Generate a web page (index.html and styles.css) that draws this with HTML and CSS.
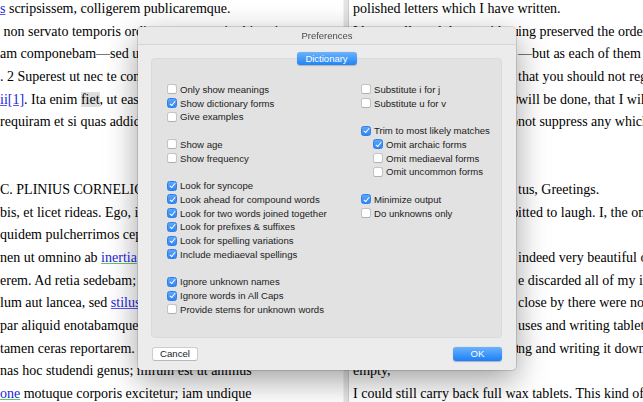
FILE: index.html
```html
<!DOCTYPE html>
<html>
<head>
<meta charset="utf-8">
<link rel="stylesheet" href="styles.css">
</head>
<body>
<div class="page">
  <div class="col-left">
    <div class="line"><a href="#">s</a> scripsissem, colligerem publicaremque.</div>
    <div class="line">&nbsp;non servato temporis ordine—neque enim histori</div>
    <div class="line">am componebam—sed ut quaeque in manus venerat.</div>
    <div class="line">. 2 Superest ut nec te consilii nec me paeniteat obsequ</div>
    <div class="line"><a href="#">ii[1]</a>. Ita enim <span class="hl">fiet</span>, ut eas quae adhuc neglectae iacent</div>
    <div class="line">requiram et si quas addidero non supprimam. Vale.</div>
    <div class="line">&nbsp;</div>
    <div class="line">&nbsp;</div>
    <div class="line">C. PLINIUS CORNELIO TACITO SUO S.</div>
    <div class="line">bis, et licet rideas. Ego, ille quem nosti, apros tres et</div>
    <div class="line">quidem pulcherrimos cepi. 'Ipse?' inquis. Ipse; non</div>
    <div class="line">nen ut omnino ab <a href="#" class="green">inertia</a> mea et quiete discederem.</div>
    <div class="line">erem. Ad retia sedebam; erat in proximo non venabu</div>
    <div class="line">lum aut lancea, sed <a href="#">stilus</a> et pugillares; medita</div>
    <div class="line">par aliquid enotabamque, ut si manus vacuas, plenas</div>
    <div class="line">tamen ceras reportarem. 2 Non est quod contem</div>
    <div class="line">nas hoc studendi genus; mirum est ut animus</div>
    <div class="line"><a href="#" class="green">one</a> motuque corporis excitetur; iam undique</div>
  </div>
  <div class="divider"></div>
  <div class="col-right">
    <div class="line">polished letters which I have written.</div>
    <div class="line"><span class="under">I have collected them, without hav</span>ing preserved the order of time</div>
    <div class="line"><span class="under">of time, for I was not writing history</span>—but as each of them came to hand.</div>
    <div class="line"><span class="under">It remains now only</span>that you should not regret your advice,</div>
    <div class="line"><span class="under">nor I my compliance; for so it</span>will be done, that I will seek out</div>
    <div class="line"><span class="under">those still lying neglected, and</span>not suppress any which I may add.</div>
    <div class="line">&nbsp;</div>
    <div class="line">&nbsp;</div>
    <div class="line"><span class="under">C. Plinius to Cornelius Taci</span>tus, Greetings.</div>
    <div class="line"><span class="under">You will laugh, and you are perm</span>itted to laugh. I, the one you know,</div>
    <div class="line"><span class="under">have caught three boars,</span></div>
    <div class="line"><span class="under">'Yourself?' you say. Yes, and</span>indeed very beautiful ones.</div>
    <div class="line"><span class="under">not that I hav</span>e discarded all of my inertia</div>
    <div class="line"><span class="under">I sat by the nets; and</span>close by there were no spears</div>
    <div class="line"><span class="under">or lances, but styl</span>uses and writing tablets;</div>
    <div class="line"><span class="under">I was thinking something, noti</span>ng and writing it down, so</div>
    <div class="line">empty,</div>
    <div class="line">I could still carry back full wax tablets. This kind of study</div>
  </div>
</div>

<div class="dialog">
  <div class="titlebar">Preferences</div>
  <div class="dbody">
    <div class="tabs"><span class="tab">Dictionary</span></div>
    <div class="box">
      <div class="opts">
        <div class="group">
          <div class="opt"><span class="cb"></span>Only show meanings</div>
          <div class="opt"><span class="cb on"></span>Show dictionary forms</div>
          <div class="opt"><span class="cb"></span>Give examples</div>
        </div>
        <div class="group">
          <div class="opt"><span class="cb"></span>Show age</div>
          <div class="opt"><span class="cb"></span>Show frequency</div>
        </div>
        <div class="group">
          <div class="opt"><span class="cb on"></span>Look for syncope</div>
          <div class="opt"><span class="cb on"></span>Look ahead for compound words</div>
          <div class="opt"><span class="cb on"></span>Look for two words joined together</div>
          <div class="opt"><span class="cb on"></span>Look for prefixes &amp; suffixes</div>
          <div class="opt"><span class="cb on"></span>Look for spelling variations</div>
          <div class="opt"><span class="cb on"></span>Include mediaeval spellings</div>
        </div>
        <div class="group">
          <div class="opt"><span class="cb on"></span>Ignore unknown names</div>
          <div class="opt"><span class="cb on"></span>Ignore words in All Caps</div>
          <div class="opt"><span class="cb"></span>Provide stems for unknown words</div>
        </div>
      </div>
      <div class="opts">
        <div class="group">
          <div class="opt"><span class="cb"></span>Substitute i for j</div>
          <div class="opt"><span class="cb"></span>Substitute u for v</div>
        </div>
        <div class="group">
          <div class="opt"><span class="cb on"></span>Trim to most likely matches</div>
          <div class="opt sub"><span class="cb on"></span>Omit archaic forms</div>
          <div class="opt sub"><span class="cb"></span>Omit mediaeval forms</div>
          <div class="opt sub"><span class="cb"></span>Omit uncommon forms</div>
        </div>
        <div class="group">
          <div class="opt"><span class="cb on"></span>Minimize output</div>
          <div class="opt"><span class="cb"></span>Do unknowns only</div>
        </div>
      </div>
    </div>
    <div class="footer">
      <span class="btn">Cancel</span>
      <span class="btn primary">OK</span>
    </div>
  </div>
</div>
</body>
</html>
```

FILE: styles.css
```css
html, body {
  margin: 0;
  padding: 0;
  background: #fff;
  overflow: hidden;
}
body {
  width: 643px;
  height: 402px;
  position: relative;
}
.page {
  display: flex;
  margin-top: -2px;
  font-family: "Liberation Serif", "Times New Roman", serif;
  font-size: 14px;
  color: #000;
  height: 404px;
}
.line {
  height: 22.65px;
  line-height: 22.65px;
  white-space: nowrap;
}
.col-left {
  width: 343px;
  overflow: hidden;
  flex: none;
}
.divider {
  width: 4px;
  flex: none;
  background: #e4e4e4;
  border-left: 1px solid #f2f2f2;
  border-right: 1px solid #cfcfcf;
}
.col-right {
  flex: 1;
  min-width: 0;
  overflow: hidden;
  padding-left: 4px;
}
.under {
  display: inline-block;
  width: 165px;
  overflow: hidden;
  vertical-align: top;
  white-space: nowrap;
}
a {
  color: #2323dc;
  text-decoration: underline;
  text-decoration-color: #5a5ae6;
}
a.green {
  text-decoration-color: #62c462;
}
.hl {
  background: #dedede;
}

/* dialog */
.dialog {
  position: absolute;
  left: 138px;
  top: 27px;
  width: 378px;
  height: 343px;
  background: #ececec;
  border-radius: 4px;
  box-shadow: 0 0 0 0.5px rgba(0, 0, 0, 0.25), 0 10px 32px rgba(0, 0, 0, 0.38);
  font-family: "Liberation Sans", Arial, sans-serif;
  display: flex;
  flex-direction: column;
  overflow: hidden;
}
.titlebar {
  height: 17px;
  line-height: 17px;
  text-align: center;
  font-size: 9.5px;
  color: #4b4b4b;
  background: rgba(232, 232, 232, 0.82);
  backdrop-filter: blur(1.5px);
  border-bottom: 1px solid #d6d6d6;
  flex: none;
}
.dbody {
  flex: 1;
  display: flex;
  flex-direction: column;
  padding: 7px 14px 11px 13px;
}
.tabs {
  display: flex;
  justify-content: center;
  position: relative;
  z-index: 1;
  height: 13px;
}
.tab {
  width: 60px;
  height: 13px;
  line-height: 13px;
  text-align: center;
  font-size: 9.5px;
  color: #fff;
  border-radius: 3px;
  background: linear-gradient(#6db3fa, #1f84f8);
  box-shadow: 0 0.5px 1px rgba(0, 0, 0, 0.2);
}
.box {
  margin-top: -7px;
  height: 280px;
  box-sizing: border-box;
  background: #e2e2e2;
  border: 1px solid #dadada;
  border-radius: 4px;
  padding: 23.5px 0 0 15px;
  display: grid;
  grid-template-columns: 194px 1fr;
  align-items: start;
}
.opts {
  display: flex;
  flex-direction: column;
  gap: 13.75px;
}
.opt {
  height: 13.75px;
  display: flex;
  align-items: center;
  font-size: 9.6px;
  color: #1c1c1c;
  white-space: nowrap;
}
.opt.sub {
  padding-left: 12px;
}
.cb {
  width: 10px;
  height: 10px;
  box-sizing: border-box;
  border-radius: 2.5px;
  background: #fff;
  border: 1px solid #c4c4c4;
  border-bottom-color: #b0b0b0;
  margin-right: 3px;
  flex: none;
  position: relative;
}
.cb.on {
  background: linear-gradient(#5ea6f9, #2d86f6);
  border-color: #2f7fe6;
}
.cb.on::after {
  content: "";
  position: absolute;
  left: 2.6px;
  top: 0.6px;
  width: 2.4px;
  height: 5px;
  border-right: 1.3px solid #fff;
  border-bottom: 1.3px solid #fff;
  transform: rotate(40deg);
}
.footer {
  margin-top: 9px;
  display: flex;
  justify-content: space-between;
  padding: 0 0 0 1px;
}
.btn {
  height: 14px;
  line-height: 14px;
  box-sizing: border-box;
  font-size: 9.6px;
  text-align: center;
  border-radius: 3px;
}
.btn:first-child {
  width: 46px;
  background: #fff;
  color: #1c1c1c;
  border: 1px solid #cdcdcd;
  border-bottom-color: #b8b8b8;
  line-height: 12px;
}
.btn.primary {
  width: 49px;
  color: #fff;
  background: linear-gradient(#6cb2fb, #1a80f9);
  box-shadow: 0 0.5px 1px rgba(0, 0, 0, 0.25);
}
```
